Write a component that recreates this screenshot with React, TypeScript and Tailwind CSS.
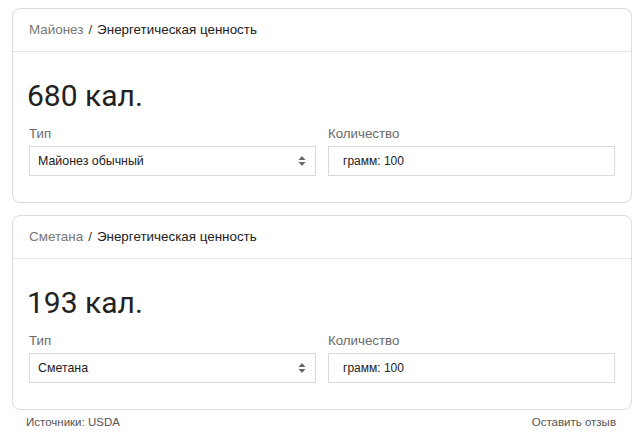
import React from 'react';

interface CardProps {
  product: string;
  calories: number;
  type: string;
}

const Arrows: React.FC = () => (
  <svg width="8" height="12" viewBox="0 0 8 12" className="shrink-0">
    <path d="M4 1 L7.5 5 H0.5 Z" fill="#666" />
    <path d="M4 11 L7.5 7 H0.5 Z" fill="#666" />
  </svg>
);

const EnergyCard: React.FC<CardProps> = ({ product, calories, type }) => (
  <div className="rounded-[8px] border border-[#dcdcdc] bg-white">
    <div className="flex h-[43px] items-center border-b border-[#e6e6e6] px-4 text-[13.4px]">
      <span className="text-[#777]">{product}</span>
      <span className="mx-[5px] text-[#333]">/</span>
      <span className="text-[#222]">Энергетическая ценность</span>
    </div>
    <div className="px-4 pt-[25px] pb-[26px]">
      <div className="-ml-[2px] font-['Roboto',sans-serif] text-[30px] leading-[38px] text-[#222]">
        {calories} кал.
      </div>
      <div className="mt-[11px] grid grid-cols-2 gap-3">
        <div>
          <div className="text-[13.3px] leading-[16px] text-[#6a6a6a]">Тип</div>
          <div className="mt-[4px] flex h-[30px] items-center justify-between border border-[#dadada] bg-white pr-[9px] pl-[8px] text-[12.4px] text-[#222]">
            <span>{type}</span>
            <Arrows />
          </div>
        </div>
        <div>
          <div className="text-[13.3px] leading-[16px] text-[#6a6a6a]">Количество</div>
          <div className="mt-[4px] flex h-[30px] items-center border border-[#dadada] bg-white px-[14px] text-[12px] text-[#222]">
            грамм: 100
          </div>
        </div>
      </div>
    </div>
  </div>
);

export default function App() {
  return (
    <div className="h-[435px] w-[640px] bg-white font-['Liberation_Sans',Arial,sans-serif]">
      <div className="ml-[12px] mr-[8px] flex flex-col gap-3 pt-[8px]">
        <EnergyCard product="Майонез" calories={680} type="Майонез обычный" />
        <EnergyCard product="Сметана" calories={193} type="Сметана" />
      </div>
      <div className="mt-[4px] flex justify-between pl-[26px] pr-[24px] text-[11.5px] text-[#555]">
        <span>Источники: USDA</span>
        <span>Оставить отзыв</span>
      </div>
    </div>
  );
}
